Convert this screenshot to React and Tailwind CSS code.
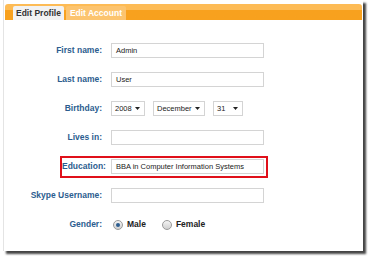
export default function App() {
  const font = { fontFamily: '"Liberation Sans", Arial, sans-serif' };
  const Label = ({ children }) => (
    <div className="w-[98px] text-right text-[8.5px] font-bold text-[#2c5d8f]" style={font}>
      {children}
    </div>
  );
  const Input = ({ value }) => (
    <div className="ml-[9px] h-[15px] w-[153px] overflow-hidden whitespace-nowrap border border-[#d4d4d4] bg-white px-[4px] text-[7.5px] leading-[13px] text-[#222]" style={font}>
      {value}
    </div>
  );
  const Select = ({ value, w }) => (
    <div className={`flex h-[15px] items-center justify-between whitespace-nowrap border border-[#d4d4d4] bg-white pl-[3px] pr-[4px] text-[7.5px] text-[#222] ${w}`} style={font}>
      <span>{value}</span>
      <svg width="5" height="3" viewBox="0 0 5 3"><path d="M0 0h5L2.5 3z" fill="#222" /></svg>
    </div>
  );
  const Radio = ({ checked }) => (
    <div className="flex h-[10px] w-[10px] items-center justify-center rounded-full border border-[#9a9a9a] bg-gradient-to-b from-[#f4f4f4] to-[#cfcfcf]">
      {checked && <div className="h-[4px] w-[4px] rounded-full bg-[#2c5d8f]" />}
    </div>
  );
  return (
    <div className="relative h-[256px] w-[368px] overflow-hidden bg-white">
      <div className="ml-[3px] h-[251px] w-[360px] border-l border-[#e4e4e4] bg-white shadow-[3px_3px_2px_#444]">
        <div className="pt-[4px] pl-[1px] pr-[1px]">
          <div className="flex h-[16px] items-end rounded-t-[3px] bg-gradient-to-b from-[#fdbb55] from-40% to-[#f8a11e] to-40% pl-[8px]">
            <div className="flex h-[14px] items-center rounded-t-[2px] bg-[#f2f2f2] px-[3px] text-[8.5px] font-bold text-[#333]" style={font}>
              Edit Profile
            </div>
            <div className="ml-[2px] flex h-[14px] items-center rounded-t-[2px] bg-[#fcc46f] px-[4px] text-[8.5px] font-bold text-white" style={font}>
              Edit Account
            </div>
          </div>
        </div>
        <div className="flex flex-col pt-[16px]">
          <div className="flex h-[29px] items-center">
            <Label>First name:</Label>
            <Input value="Admin" />
          </div>
          <div className="flex h-[29px] items-center">
            <Label>Last name:</Label>
            <Input value="User" />
          </div>
          <div className="flex h-[29px] items-center">
            <Label>Birthday:</Label>
            <div className="ml-[9px] flex gap-[8px]">
              <Select value="2008" w="w-[34px]" />
              <Select value="December" w="w-[52px]" />
              <Select value="31" w="w-[30px]" />
            </div>
          </div>
          <div className="flex h-[29px] items-center">
            <Label>Lives in:</Label>
            <Input value="" />
          </div>
          <div className="flex h-[29px] items-center">
            <div className="ml-[56px] flex h-[22px] w-[208px] items-center border-2 border-[#e0101a]">
              <div className="w-[40px] text-right text-[8.5px] font-bold text-[#2c5d8f]" style={font}>Education:</div>
              <div className="ml-[9px] h-[15px] w-[153px] overflow-hidden whitespace-nowrap border border-[#d4d4d4] bg-white px-[4px] text-[7.5px] leading-[13px] text-[#222]" style={font}>
                BBA in Computer Information Systems
              </div>
            </div>
          </div>
          <div className="flex h-[29px] items-center">
            <Label>Skype Username:</Label>
            <Input value="" />
          </div>
          <div className="flex h-[29px] items-center">
            <Label>Gender:</Label>
            <div className="ml-[11px] flex items-center text-[8.5px] font-bold text-[#222]" style={font}>
              <Radio checked />
              <span className="ml-[4px]">Male</span>
              <div className="ml-[16px]"><Radio /></div>
              <span className="ml-[4px]">Female</span>
            </div>
          </div>
        </div>
      </div>
    </div>
  );
}
